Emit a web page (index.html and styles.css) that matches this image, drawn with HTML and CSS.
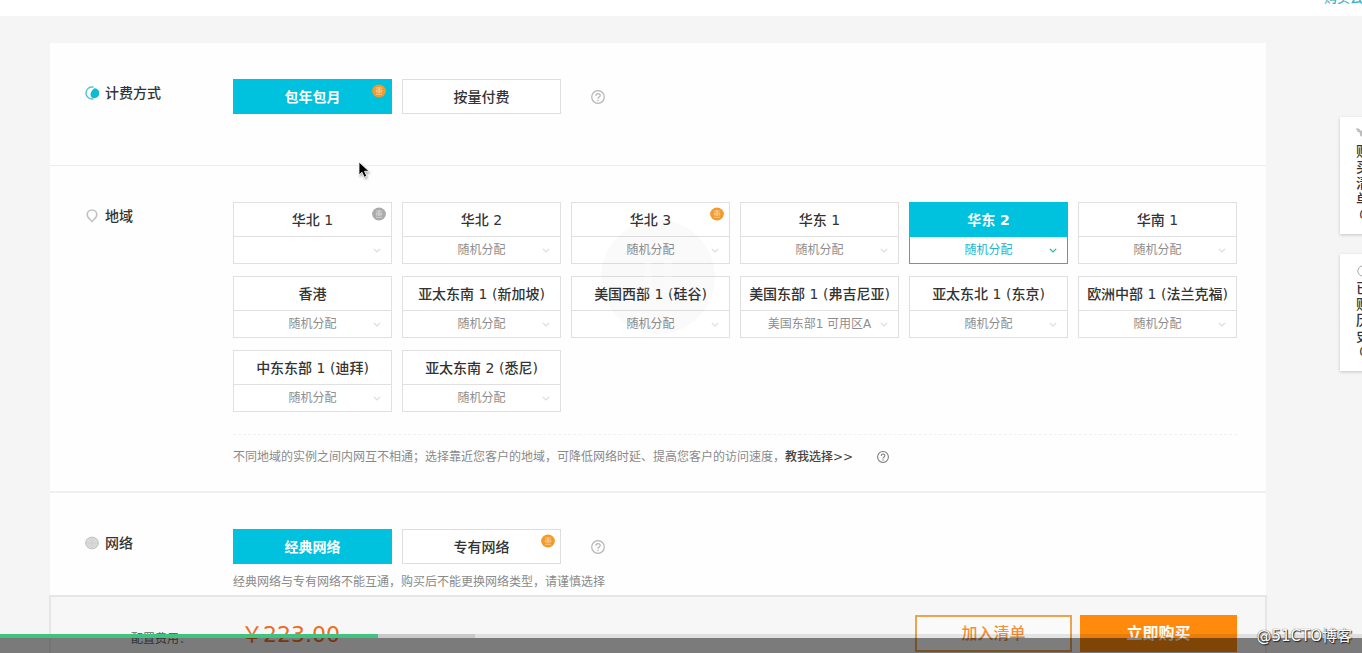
FILE: index.html
```html
<!DOCTYPE html>
<html lang="zh-CN">
<head>
<meta charset="utf-8">
<title>云服务器购买</title>
<link rel="stylesheet" href="styles.css">
</head>
<body>
<svg class="defs" aria-hidden="true">
  <symbol id="chevron" viewBox="0 0 8 5"><path d="M.8 .8 4 4 7.200 .8" fill="none" stroke="currentColor" stroke-width="1.200"/></symbol>
  <symbol id="help" viewBox="0 0 14 14"><circle cx="7" cy="7" r="6.300" fill="none" stroke="currentColor" stroke-width="1.200"/><path d="M4.900 5.700c0-2.800 4.300-2.700 4.300-.2C9.200 7 7 7 7 8.700" fill="none" stroke="currentColor" stroke-width="1.200"/><circle cx="7" cy="10.500" r=".8" fill="currentColor"/></symbol>
  <symbol id="badge" viewBox="0 0 14 14"><ellipse cx="7" cy="7" rx="6.900" ry="6.500" fill="currentColor"/><path d="M3.800 4h6.400M4.300 6h5.400M4.300 8h5.400M7 3v6M4.300 6v2M9.700 6v2M4 10.300h6" fill="none" stroke="#fff" stroke-opacity=".5" stroke-width=".9"/></symbol>
</svg>

<header class="topbar"><a class="topbar-link" href="#">购买云服务器</a></header>

<main class="page">
  <div class="panel">
    <section class="row row-billing">
      <h2 class="label">
        <svg class="label-icon" viewBox="0 0 14 14"><path d="M8.500 1.200A6 6 0 1 0 8.500 12.800" fill="none" stroke="#5cc5cf" stroke-width="1.500"/><path d="M9.300 2.200a4.900 4.900 0 0 1 0 10c-2.800 0-4-2-3.700-4.500C6 5 8 3.300 9.300 2.200z" fill="#0bbdd3"/></svg>
        计费方式
      </h2>
      <div class="options">
        <button class="option is-active">包年包月<svg class="badge badge-orange"><use href="#badge"/></svg></button>
        <button class="option">按量付费</button>
        <svg class="help"><use href="#help"/></svg>
      </div>
    </section>

    <section class="row row-region">
      <h2 class="label">
        <svg class="label-icon" viewBox="0 0 14 14"><path d="M7 12.500C5.500 10.700 2.200 8.700 2.200 5.800a4.800 4.800 0 0 1 9.600 0C11.800 8.700 8.500 10.700 7 12.500z" fill="none" stroke="#c2c2c2" stroke-width="1.600"/></svg>
        地域
      </h2>
      <div class="region-body">
        <div class="options">
          <div class="region"><button class="region-name">华北 1</button><svg class="badge badge-grey"><use href="#badge"/></svg><div class="zone"><select aria-label="华北 1 可用区" disabled><option></option></select><svg><use href="#chevron"/></svg></div></div>
          <div class="region"><button class="region-name">华北 2</button><div class="zone"><select aria-label="华北 2 可用区"><option>随机分配</option></select><svg><use href="#chevron"/></svg></div></div>
          <div class="region"><button class="region-name">华北 3</button><svg class="badge badge-orange"><use href="#badge"/></svg><div class="zone"><select aria-label="华北 3 可用区"><option>随机分配</option></select><svg><use href="#chevron"/></svg></div></div>
          <div class="region"><button class="region-name">华东 1</button><div class="zone"><select aria-label="华东 1 可用区"><option>随机分配</option></select><svg><use href="#chevron"/></svg></div></div>
          <div class="region is-active"><button class="region-name">华东 2</button><div class="zone"><select aria-label="华东 2 可用区"><option>随机分配</option></select><svg><use href="#chevron"/></svg></div></div>
          <div class="region"><button class="region-name">华南 1</button><div class="zone"><select aria-label="华南 1 可用区"><option>随机分配</option></select><svg><use href="#chevron"/></svg></div></div>
          <div class="region"><button class="region-name">香港</button><div class="zone"><select aria-label="香港可用区"><option>随机分配</option></select><svg><use href="#chevron"/></svg></div></div>
          <div class="region"><button class="region-name">亚太东南 1 (新加坡)</button><div class="zone"><select aria-label="新加坡可用区"><option>随机分配</option></select><svg><use href="#chevron"/></svg></div></div>
          <div class="region"><button class="region-name">美国西部 1 (硅谷)</button><div class="zone"><select aria-label="硅谷可用区"><option>随机分配</option></select><svg><use href="#chevron"/></svg></div></div>
          <div class="region"><button class="region-name">美国东部 1 (弗吉尼亚)</button><div class="zone"><select aria-label="弗吉尼亚可用区"><option>美国东部1 可用区A</option></select><svg><use href="#chevron"/></svg></div></div>
          <div class="region"><button class="region-name">亚太东北 1 (东京)</button><div class="zone"><select aria-label="东京可用区"><option>随机分配</option></select><svg><use href="#chevron"/></svg></div></div>
          <div class="region"><button class="region-name">欧洲中部 1 (法兰克福)</button><div class="zone"><select aria-label="法兰克福可用区"><option>随机分配</option></select><svg><use href="#chevron"/></svg></div></div>
          <div class="region"><button class="region-name">中东东部 1 (迪拜)</button><div class="zone"><select aria-label="迪拜可用区"><option>随机分配</option></select><svg><use href="#chevron"/></svg></div></div>
          <div class="region"><button class="region-name">亚太东南 2 (悉尼)</button><div class="zone"><select aria-label="悉尼可用区"><option>随机分配</option></select><svg><use href="#chevron"/></svg></div></div>
        </div>
        <div class="hint">
          <span>不同地域的实例之间内网互不相通；选择靠近您客户的地域，可降低网络时延、提高您客户的访问速度，<a class="hint-link" href="#">教我选择&gt;&gt;</a></span>
          <svg class="hint-help"><use href="#help"/></svg>
        </div>
      </div>
    </section>

    <section class="row row-network">
      <h2 class="label">
        <svg class="label-icon" viewBox="0 0 14 14"><ellipse cx="7" cy="7" rx="6.400" ry="5.900" fill="#d9d9d9" stroke="#c2c2c2"/><path d="M1 7h12M7 1.200v11.600" stroke="#d0d0d0" fill="none"/></svg>
        网络
      </h2>
      <div class="network-body">
        <div class="options">
          <button class="option is-active">经典网络</button>
          <button class="option">专有网络<svg class="badge badge-orange"><use href="#badge"/></svg></button>
          <svg class="help"><use href="#help"/></svg>
        </div>
        <p class="note">经典网络与专有网络不能互通，购买后不能更换网络类型，请谨慎选择</p>
      </div>
    </section>
  </div>
</main>

<footer class="checkout">
  <span class="fee-label">配置费用：</span>
  <strong class="price">￥223.00</strong>
  <button class="buy">加入清单</button>
  <button class="buy buy-now">立即购买</button>
</footer>

<aside class="side">
  <a class="side-card" href="#">
    <svg viewBox="0 0 14 12"><path d="M0 1h3l2 7h6l2-5H2M1 3l4 1" fill="#bbb" stroke="#bbb"/></svg>
    <span>购买清单</span><b>0</b>
  </a>
  <a class="side-card" href="#">
    <svg viewBox="0 0 14 12"><circle cx="7" cy="6" r="5.200" fill="none" stroke="#aaa"/><path d="M7 3v3h3" fill="none" stroke="#aaa"/></svg>
    <span>已购历史</span><b>0</b>
  </a>
</aside>

<svg class="pause" viewBox="0 0 116 116"><circle cx="58" cy="58" r="57" fill="#000" fill-opacity=".02"/><path d="M48 42v32M68 42v32" stroke="#fff" stroke-opacity=".25" stroke-width="8"/></svg>
<svg class="cursor" viewBox="0 0 12 18"><path d="M1 1v13l3-2.800 2.200 5 2.500-1.100-2.200-4.800H11z" fill="#000" stroke="#fff" stroke-width=".8"/></svg>

<div class="player">
  <div class="track"><div class="played"></div><div class="buffered"></div></div>
  <div class="controls"></div>
  <span class="watermark">@51CTO博客</span>
</div>
</body>
</html>
```

FILE: styles.css
```css
* { box-sizing: border-box; }

body {
  margin: 0;
  height: 100vh;
  display: flex;
  flex-direction: column;
  overflow: hidden;
  position: relative;
  background: #f5f5f5;
  color: #333;
  font: 14px/20px "DejaVu Sans", "Noto Sans CJK SC", sans-serif;
}

h2, p { margin: 0; font-weight: 400; }
a { color: inherit; text-decoration: none; }
button, select { font: inherit; color: inherit; margin: 0; border-radius: 0; cursor: pointer; }
.defs { position: absolute; width: 0; height: 0; }

.topbar {
  flex: none;
  display: flex;
  justify-content: flex-end;
  align-items: flex-start;
  height: 16px;
  background: #fff;
  overflow: hidden;
}
.topbar-link {
  margin: -12px -40px 0 0;
  color: #35b3c1;
  font-size: 13px;
  font-weight: 500;
  white-space: nowrap;
}

.page { flex: 1; min-height: 0; padding: 27px 96px 0 50px; overflow: hidden; }
.panel { min-height: 100%; background: #fefefe; }

.row {
  display: grid;
  grid-template-columns: 147px 1fr;
  align-items: start;
  padding: 36px 29px 0 36px;
}
.row-billing { height: 123px; border-bottom: 1px solid #ededed; }
.row-region { border-bottom: 2px solid #f0f0f0; }

.label {
  display: flex;
  align-items: center;
  gap: 6px;
  height: 28px;
  margin-left: -1px;
  font-size: 14px;
  font-weight: 500;
}
.label-icon { width: 14px; height: 14px; }

.options {
  display: grid;
  grid-template-columns: repeat(6, 1fr);
  gap: 13px 10px;
}

.option {
  position: relative;
  height: 35px;
  padding: 0;
  border: 1px solid #dedede;
  background: #fff;
  font-weight: 500;
}
.option.is-active { border-color: #00c1de; background: #00c1de; color: #fff; font-weight: 700; }

.badge { position: absolute; top: 4px; right: 5px; width: 14px; height: 14px; }
.badge-orange { color: #f39a2b; }
.badge-grey { color: #aaa; }

.help { align-self: center; width: 14px; height: 14px; margin-left: 20px; color: #b5b5b5; }

.region { position: relative; border: 1px solid #e0e0e0; background: #fff; }
.region-name {
  display: block;
  width: 100%;
  height: 33px;
  padding: 0;
  border: 0;
  background: none;
  font-weight: 500;
  white-space: nowrap;
}
.zone { position: relative; border-top: 1px solid #e0e0e0; color: #8e8e8e; }
.zone select {
  display: block;
  width: 100%;
  height: 26px;
  padding: 0;
  border: 0;
  background: none;
  appearance: none;
  font-size: 12px;
  text-align: center;
  text-align-last: center;
}
.zone svg { position: absolute; top: 11px; right: 10px; width: 8px; height: 5px; color: #ddd; pointer-events: none; }
.region.is-active { border-color: #00c1de; }
.is-active .region-name { background: #00c1de; color: #fff; font-weight: 700; }
.is-active .zone { border-color: #00c1de; color: #1fb4c9; }
.is-active .zone svg { color: #1fb4a9; }
.region-body .options { row-gap: 12px; }

.hint {
  display: flex;
  align-items: center;
  gap: 24px;
  margin-top: 22px;
  padding: 12px 0 24px;
  border-top: 1px dashed #f1f1f1;
  color: #8a8a8a;
  font-size: 12px;
}
.hint-link { color: #444; font-weight: 500; }
.hint-help { width: 12px; height: 12px; color: #777; }
.note { margin-top: 8px; color: #8a8a8a; font-size: 12px; }

.checkout {
  flex: none;
  display: grid;
  grid-template-columns: 112px 1fr 157px 157px;
  column-gap: 8px;
  align-items: start;
  height: 58px;
  margin: 0 95px 0 49px;
  padding: 18px 28px 0 80px;
  border: 2px solid #e6e6e6;
  border-width: 2px 2px 0;
  background: #f7f7f8;
}
.fee-label { padding-top: 14px; color: #666; font-size: 12px; }
.price { margin-left: -10px; color: #f06a1f; font-size: 22px; line-height: 40px; font-weight: 400; }
.buy {
  height: 37px;
  padding: 0;
  border: 2px solid #eaa54e;
  background: #fafafa;
  color: #f3913a;
  font-size: 16px;
  font-weight: 500;
}
.buy-now { border-color: #ff8a0c; background: #ff8a0c; color: #fff; font-weight: 700; }

.side {
  position: absolute;
  top: 117px;
  right: -24px;
  width: 46px;
  display: grid;
  gap: 20px;
}
.side-card {
  display: flex;
  flex-direction: column;
  align-items: center;
  height: 117px;
  padding: 11px 16px 0;
  background: #fff;
  box-shadow: 0 1px 3px rgba(0, 0, 0, .2);
  line-height: 16px;
  font-weight: 500;
}
.side-card svg { width: 14px; height: 12px; margin-bottom: 3px; }
.side-card span { width: 14px; }
.side-card b { font-size: 12px; font-weight: 400; }

.pause { position: absolute; top: 219px; left: 600px; width: 116px; height: 116px; pointer-events: none; }
.cursor { position: absolute; top: 161px; left: 358px; width: 12px; height: 18px; filter: drop-shadow(1px 2px 1px rgba(0, 0, 0, .3)); }

.player { position: absolute; left: 0; right: 0; bottom: 0; pointer-events: none; }
.track { display: flex; height: 4px; background: rgba(0, 0, 0, .09); }
.played { width: 27.75%; background: #3fc380; }
.buffered { width: 7.1%; background: rgba(0, 0, 0, .1); }
.controls { height: 15px; background: rgba(0, 0, 0, .5); }
.watermark {
  position: absolute;
  right: 10px;
  bottom: 6px;
  color: #fff;
  font-size: 15px;
  line-height: 22px;
  text-shadow: 1px 1px 1px #222, 0 0 1px #222;
}
```
